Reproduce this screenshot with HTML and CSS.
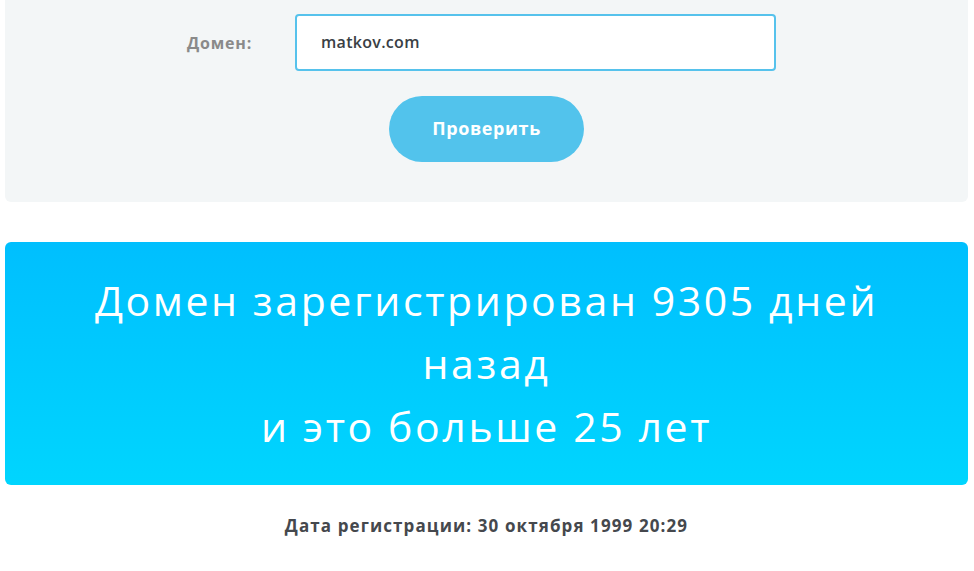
FILE: index.html
```html
<!DOCTYPE html>
<html lang="ru">
<head>
<meta charset="utf-8">
<title>Проверка домена</title>
<link rel="stylesheet" href="styles.css">
</head>
<body>
<div class="page">
  <section class="panel">
    <form class="form">
      <div class="row">
        <label class="label" for="domain">Домен:</label>
        <input class="input" id="domain" type="text" value="matkov.com">
      </div>
      <button class="btn" type="button">Проверить</button>
    </form>
  </section>
  <section class="result">
    <p class="result-text">Домен зарегистрирован 9305 дней<br>назад<br>и это больше 25 лет</p>
  </section>
  <p class="date">Дата регистрации: 30 октября 1999 20:29</p>
</div>
</body>
</html>
```
FILE: styles.css
```css
html, body {
  margin: 0;
  padding: 0;
  background: #ffffff;
  font-family: "Open Sans", "Liberation Sans", sans-serif;
}
.page {
  padding: 0 6px 0 5px;
}
.panel {
  background: #f3f6f7;
  border-radius: 0 0 6px 6px;
  height: 202px;
  box-sizing: border-box;
  padding-top: 14px;
}
.form {
  display: flex;
  flex-direction: column;
  align-items: center;
  margin: 0;
}
.row {
  display: flex;
  align-items: center;
  margin-left: -10px;
}
.label {
  font-size: 16px;
  font-weight: 700;
  color: #8a8a8a;
  letter-spacing: 0.8px;
  width: 108px;
  text-align: left;
}
.input {
  width: 481px;
  height: 57px;
  box-sizing: border-box;
  border: 2px solid #56c2ec;
  border-radius: 4px;
  background: #fff;
  padding: 0 0 2px 24px;
  font-family: "Open Sans", "Liberation Sans", sans-serif;
  font-size: 16px;
  font-weight: 600;
  color: #3a3f45;
  letter-spacing: 0.3px;
  outline: none;
}
.btn {
  margin-top: 25px;
  width: 195px;
  height: 66px;
  border: none;
  border-radius: 33px;
  background: #52c3ec;
  color: #ffffff;
  font-family: "Open Sans", "Liberation Sans", sans-serif;
  font-size: 18px;
  font-weight: 700;
  letter-spacing: 0.6px;
  padding-bottom: 4px;
}
.result {
  margin-top: 40px;
  height: 243px;
  border-radius: 6px;
  background: linear-gradient(180deg, #00bffe 0%, #00d5fe 100%);
  box-sizing: border-box;
  padding-top: 27px;
}
.result-text {
  margin: 0;
  text-align: center;
  color: #ffffff;
  font-size: 41px;
  font-weight: 400;
  letter-spacing: 2.6px;
  line-height: 63px;
}
.date {
  margin: 29px 0 0;
  text-align: center;
  font-size: 17px;
  font-weight: 700;
  letter-spacing: 1.1px;
  color: #45484d;
}
```
